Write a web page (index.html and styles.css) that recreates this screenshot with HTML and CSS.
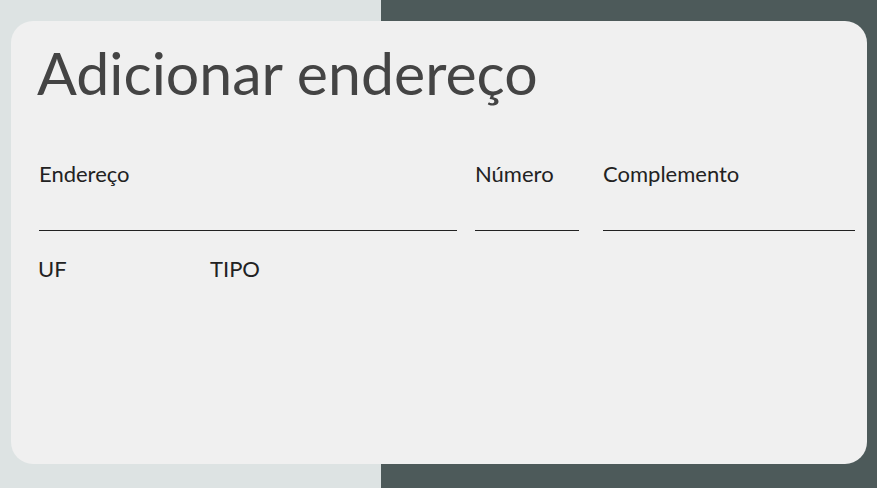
FILE: index.html
```html
<!DOCTYPE html>
<html lang="pt-BR">
<head>
<meta charset="utf-8">
<title>Adicionar endereço</title>
<link rel="stylesheet" href="styles.css">
</head>
<body>
<div class="page">
  <div class="card">
    <h1 class="title">Adicionar endereço</h1>
    <div class="row">
      <label class="field field-endereco">
        <span class="label">Endereço</span>
        <span class="input"></span>
      </label>
      <label class="field field-numero">
        <span class="label">Número</span>
        <span class="input"></span>
      </label>
      <label class="field field-complemento">
        <span class="label">Complemento</span>
        <span class="input"></span>
      </label>
    </div>
    <div class="row2">
      <span class="label2 uf">UF</span>
      <span class="label2">TIPO</span>
    </div>
  </div>
</div>
</body>
</html>
```
FILE: styles.css
```css
html, body {
  margin: 0;
  padding: 0;
}
body {
  width: 877px;
  height: 488px;
  overflow: hidden;
  font-family: Lato, "Open Sans", sans-serif;
  background: linear-gradient(to right, #dde3e3 0, #dde3e3 381px, #4d5a5a 381px, #4d5a5a 100%);
}
.page {
  padding: 21px 10px 0 11px;
}
.card {
  box-sizing: border-box;
  width: 856px;
  height: 443px;
  background: #f0f0f0;
  border-radius: 22px;
  padding: 17px 12px 0 28px;
}
.title {
  margin: 0;
  font-weight: 400;
  font-size: 59px;
  line-height: 70px;
  color: #444444;
  margin-left: -2px;
}
.row {
  display: flex;
  margin-top: 53px;
}
.field {
  display: flex;
  flex-direction: column;
}
.field-endereco { width: 418px; margin-right: 18px; }
.field-numero { width: 104px; margin-right: 24px; }
.field-complemento { width: 252px; }
.label {
  font-size: 22px;
  line-height: 26px;
  color: #222222;
}
.input {
  display: block;
  height: 43px;
  border-bottom: 1px solid #222222;
}
.row2 {
  display: flex;
  margin-top: 25px;
}
.label2 {
  font-size: 22px;
  line-height: 26px;
  color: #222222;
  margin-left: -1px;
}
.uf {
  width: 173px;
}
```
